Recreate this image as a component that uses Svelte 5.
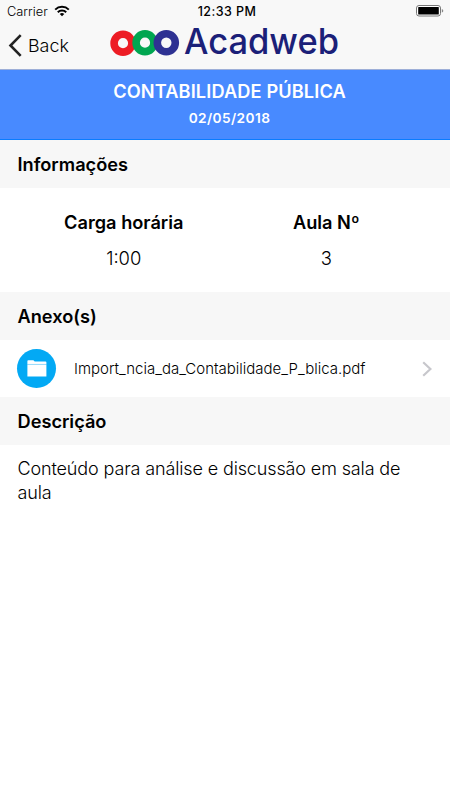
<script lang="ts">
	type Anexo = {
		nome: string;
	};

	const aula = {
		disciplina: 'CONTABILIDADE PÚBLICA',
		data: '02/05/2018',
		cargaHoraria: '1:00',
		numero: 3,
		descricao: 'Conteúdo para análise e discussão em sala de aula'
	};

	const anexos: Anexo[] = [{ nome: 'Import_ncia_da_Contabilidade_P_blica.pdf' }];
</script>

<svelte:head>
	<title>Acadweb</title>
</svelte:head>

<div class="page">
	<header>
		<div class="status">
			<span class="carrier">
				Carrier
				<svg width="16" height="12" viewBox="0 0 16 12" fill="none" stroke="#000" stroke-width="2">
					<path d="M1.2 4.6a9.7 9.7 0 0 1 13.6 0M3.8 7.3a6 6 0 0 1 8.4 0" />
					<path d="M8 11.3 5.7 9a3.3 3.3 0 0 1 4.6 0Z" fill="#000" stroke="none" />
				</svg>
			</span>
			<span class="clock">12:33 PM</span>
			<svg class="battery" width="29" height="12" viewBox="0 0 29 12">
				<rect x="1.5" y=".5" width="24" height="10.5" rx="2.5" fill="#fff" stroke="#777" />
				<rect x="3.2" y="1.9" width="20.6" height="7.7" rx=".7" />
				<path d="M26.8 4q1.5.4 1.5 1.8t-1.5 1.8Z" fill="#888" />
			</svg>
		</div>
		<div class="nav">
			<button class="back">
				<svg width="14" height="23" viewBox="0 0 14 23" fill="none" stroke="#222" stroke-width="2.6">
					<path d="M12.7 1.2 2.5 11.5l10.2 10.3" />
				</svg>
				<span>Back</span>
			</button>
			<svg class="logo" width="236" height="46" viewBox="0 0 236 46">
				<g fill="none" stroke-width="7.6">
					<circle cx="13" cy="23.2" r="8.9" stroke="#ed1c24" />
					<circle cx="35" cy="22.7" r="8.9" stroke="#00a650" />
					<circle cx="56.3" cy="22.7" r="9" stroke="#2e3192" />
				</g>
				<text x="74" y="34" textLength="155" lengthAdjust="spacingAndGlyphs">Acadweb</text>
			</svg>
		</div>
	</header>

	<section class="banner">
		<h1>{aula.disciplina}</h1>
		<p>{aula.data}</p>
	</section>

	<h2>Informações</h2>
	<dl>
		<div>
			<dt>Carga horária</dt>
			<dd>{aula.cargaHoraria}</dd>
		</div>
		<div>
			<dt>Aula Nº</dt>
			<dd>{aula.numero}</dd>
		</div>
	</dl>

	<h2>Anexo(s)</h2>
	{#each anexos as anexo}
		<button class="anexo">
			<span class="icon">
				<svg width="20" height="17" viewBox="0 0 20 17" fill="#fff">
					<path d="M.4 4V1Q.4 .2 1.2 .2h5.2l1.3 1.2h10.8q.9 0 .9.9V4ZM.4 4.8h19v11.7H.4Z" />
					<path d="M.4 3.9h19v1H.4Z" fill="#a8dffb" />
				</svg>
			</span>
			<span class="nome">{anexo.nome}</span>
			<svg width="11" height="16" viewBox="0 0 11 16" fill="none" stroke="#c7c7cc" stroke-width="2.2">
				<path d="m1.2 1.2 7.2 6.8-7.2 6.8" />
			</svg>
		</button>
	{/each}

	<h2>Descrição</h2>
	<p class="descricao">{aula.descricao}</p>
</div>

<style>
	:global(body) {
		margin: 0;
		background: #fff;
	}

	.page {
		min-height: 800px;
		color: #000;
		font-family: Inter, 'Liberation Sans', sans-serif;
		font-weight: 300;
	}

	h1,
	h2,
	p,
	dl,
	dd {
		margin: 0;
	}

	svg {
		display: block;
		flex: none;
	}

	button {
		border: 0;
		padding: 0;
		background: none;
		color: inherit;
		font: inherit;
		text-align: left;
	}

	header {
		box-sizing: border-box;
		height: 70px;
		border-bottom: 1px solid #9eafd8;
		background: #f8f8f8;
	}

	.status {
		display: grid;
		grid-template-columns: 1fr auto 1fr;
		align-items: center;
		height: 22px;
		padding: 0 6px 0 7px;
		font-size: 12.5px;
	}

	.carrier {
		display: flex;
		align-items: center;
		gap: 6px;
		font-size: 12.8px;
	}

	.clock {
		padding-left: 3px;
		font-weight: 500;
		letter-spacing: 0.45px;
	}

	.battery {
		justify-self: end;
	}

	.nav {
		display: flex;
		align-items: center;
		height: 46px;
		padding-left: 8px;
	}

	.back {
		display: flex;
		align-items: center;
		gap: 6px;
		width: 102px;
		font-size: 17.9px;
	}

	.logo {
		margin-top: -5px;
	}

	.logo text {
		fill: #1b2078;
		font-size: 35.5px;
		font-weight: 500;
	}

	.banner {
		box-sizing: border-box;
		height: 70px;
		padding-top: 9px;
		border-bottom: 1px solid #0a7cff;
		background: #488aff;
		color: #fff;
		text-align: center;
	}

	.banner h1 {
		padding-left: 9px;
		font-size: 18.2px;
		font-weight: 600;
		letter-spacing: 0.12px;
		line-height: 24px;
	}

	.banner p {
		padding-left: 9px;
		margin-top: 6px;
		font-size: 13.7px;
		font-weight: 600;
		letter-spacing: 0.4px;
		line-height: 18px;
	}

	h2 {
		height: 48px;
		padding-left: 17.5px;
		background: #f7f7f7;
		font-size: 18.2px;
		font-weight: 600;
		line-height: 48px;
	}

	dl {
		display: grid;
		grid-template-columns: 1fr 1fr;
		box-sizing: border-box;
		height: 104px;
		padding: 22px 22.5px 0;
		text-align: center;
	}

	dt {
		font-size: 18.2px;
		font-weight: 600;
		line-height: 24px;
	}

	dd {
		margin-top: 12px;
		font-size: 18.4px;
		line-height: 24px;
	}

	.anexo {
		display: flex;
		align-items: center;
		box-sizing: border-box;
		width: 100%;
		height: 57px;
		padding: 0 17px;
	}

	.icon {
		display: grid;
		place-items: center;
		width: 39px;
		height: 39px;
		border-radius: 50%;
		background: #03a9f4;
	}

	.nome {
		flex: 1;
		margin-left: 18px;
		font-size: 15px;
	}

	.descricao {
		padding: 12px 18px 12px 17.5px;
		font-size: 18px;
		letter-spacing: -0.13px;
		line-height: 24px;
	}
</style>
